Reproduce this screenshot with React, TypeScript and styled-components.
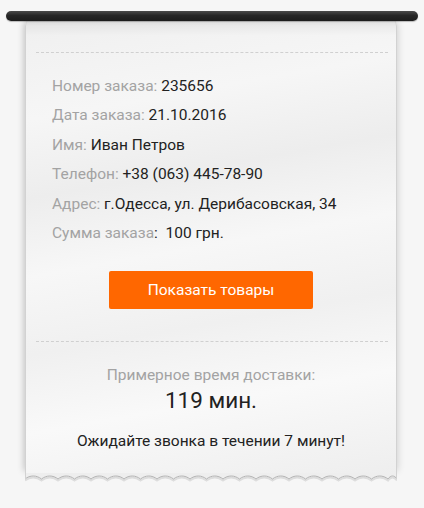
import React from "react";
import styled, { createGlobalStyle } from "styled-components";

const Global = createGlobalStyle`
  html, body { margin: 0; padding: 0; background: #f6f6f6; }
  body { font-family: Roboto, "Liberation Sans", sans-serif; }
`;

const Page = styled.div`
  width: 424px;
  height: 508px;
  padding-top: 11px;
  box-sizing: border-box;
  background: #f6f6f6;
`;

const Roller = styled.div`
  position: relative;
  z-index: 2;
  margin: 0 6px;
  height: 10px;
  border-radius: 5px;
  background: linear-gradient(#4a4a4a 0%, #262626 45%, #1c1c1c 100%);
  box-shadow: 0 1px 1px rgba(0, 0, 0, 0.25);
`;

const Paper = styled.div`
  position: relative;
  z-index: 1;
  margin: -5px 27px 0 25px;
  display: flex;
  flex-direction: column;
`;

const Sheet = styled.div`
  border-radius: 10px 10px 0 0;
  border-left: 1px solid #d2d2d2;
  border-right: 1px solid #d2d2d2;
  background:
    linear-gradient(180deg, rgba(0,0,0,0.14) 0px, rgba(0,0,0,0.04) 10px, rgba(0,0,0,0) 20px),
    linear-gradient(170deg, #efefef 0%, #f6f6f6 20%, #ededed 35%, #f7f7f7 50%, #f0f0f0 65%, #f9f9f9 80%, #eeeeee 100%);
  box-shadow: -4px 0 7px -3px rgba(0, 0, 0, 0.22), 4px 0 7px -3px rgba(0, 0, 0, 0.15);
  padding-top: 36px;
  display: flex;
  flex-direction: column;
`;

const Divider = styled.div`
  margin: 0 8px 0 10px;
  border-top: 1px dashed #d0d0d0;
`;

const InfoList = styled.div`
  padding: 19px 0 0 26px;
  display: flex;
  flex-direction: column;
`;

const InfoRow = styled.div`
  font-size: 15.5px;
  line-height: 29.4px;
  color: #222;
  white-space: nowrap;
`;

const Label = styled.span`
  color: #a3a3a3;
`;

const ButtonWrap = styled.div`
  display: flex;
  justify-content: center;
  padding: 23px 0 32px;
`;

const ShowButton = styled.button`
  width: 204px;
  height: 38px;
  border: none;
  border-radius: 2px;
  background: #ff6700;
  color: #fff;
  font-family: Roboto, "Liberation Sans", sans-serif;
  font-size: 15.5px;
  cursor: pointer;
`;

const Delivery = styled.div`
  display: flex;
  flex-direction: column;
  align-items: center;
  padding: 23px 0 23px;
`;

const DeliveryLabel = styled.div`
  font-size: 15.5px;
  line-height: 20px;
  color: #a3a3a3;
`;

const DeliveryTime = styled.div`
  font-size: 22.5px;
  line-height: 30px;
  color: #222;
  margin-bottom: 16px;
`;

const Note = styled.div`
  font-size: 15.5px;
  line-height: 20px;
  color: #222;
`;

const Edge = styled.svg`
  display: block;
  margin-top: -1px;
`;

function waveLine(width: number, period: number, amp: number, base: number) {
  let d = `M0,${base}`;
  let x = 0;
  while (x < width) {
    const w = Math.min(period, width - x);
    d += ` C${x + w * 0.3},${base + amp} ${x + w * 0.7},${base + amp} ${x + w},${base}`;
    x += w;
  }
  return d;
}

const rows: [string, string][] = [
  ["Номер заказа:", " 235656"],
  ["Дата заказа:", " 21.10.2016"],
  ["Имя:", " Иван Петров"],
  ["Телефон:", " +38 (063) 445-78-90"],
  ["Адрес:", " г.Одесса, ул. Дерибасовская, 34"],
  ["Сумма заказа", ":\u00a0\u00a0100 грн."],
];

export default function App() {
  const W = 372;
  const line = waveLine(W, 16.5, -4, 6);
  return (
    <Page>
      <Global />
      <Roller />
      <Paper>
        <Sheet>
          <Divider />
          <InfoList>
            {rows.map(([l, v]) => (
              <InfoRow key={l}>
                <Label>{l}</Label>
                {v}
              </InfoRow>
            ))}
          </InfoList>
          <ButtonWrap>
            <ShowButton>Показать товары</ShowButton>
          </ButtonWrap>
          <Divider />
          <Delivery>
            <DeliveryLabel>Примерное время доставки:</DeliveryLabel>
            <DeliveryTime>119 мин.</DeliveryTime>
            <Note>Ожидайте звонка в течении 7 минут!</Note>
          </Delivery>
        </Sheet>
        <Edge width={W} height={10} viewBox={`0 0 ${W} 10`}>
          <path d={line} fill="none" stroke="rgba(0,0,0,0.10)" strokeWidth="2" transform="translate(0,1.5)" />
          <path d={`M0,0 L0,6 ${line.slice(line.indexOf("C"))} L${W},0 Z`} fill="#eeeeee" />
          <path d={line} fill="none" stroke="#b4b4b4" strokeWidth="1" />
          <line x1="0.5" y1="0" x2="0.5" y2="6" stroke="#d2d2d2" />
          <line x1={W - 0.5} y1="0" x2={W - 0.5} y2="6" stroke="#d2d2d2" />
        </Edge>
      </Paper>
    </Page>
  );
}
